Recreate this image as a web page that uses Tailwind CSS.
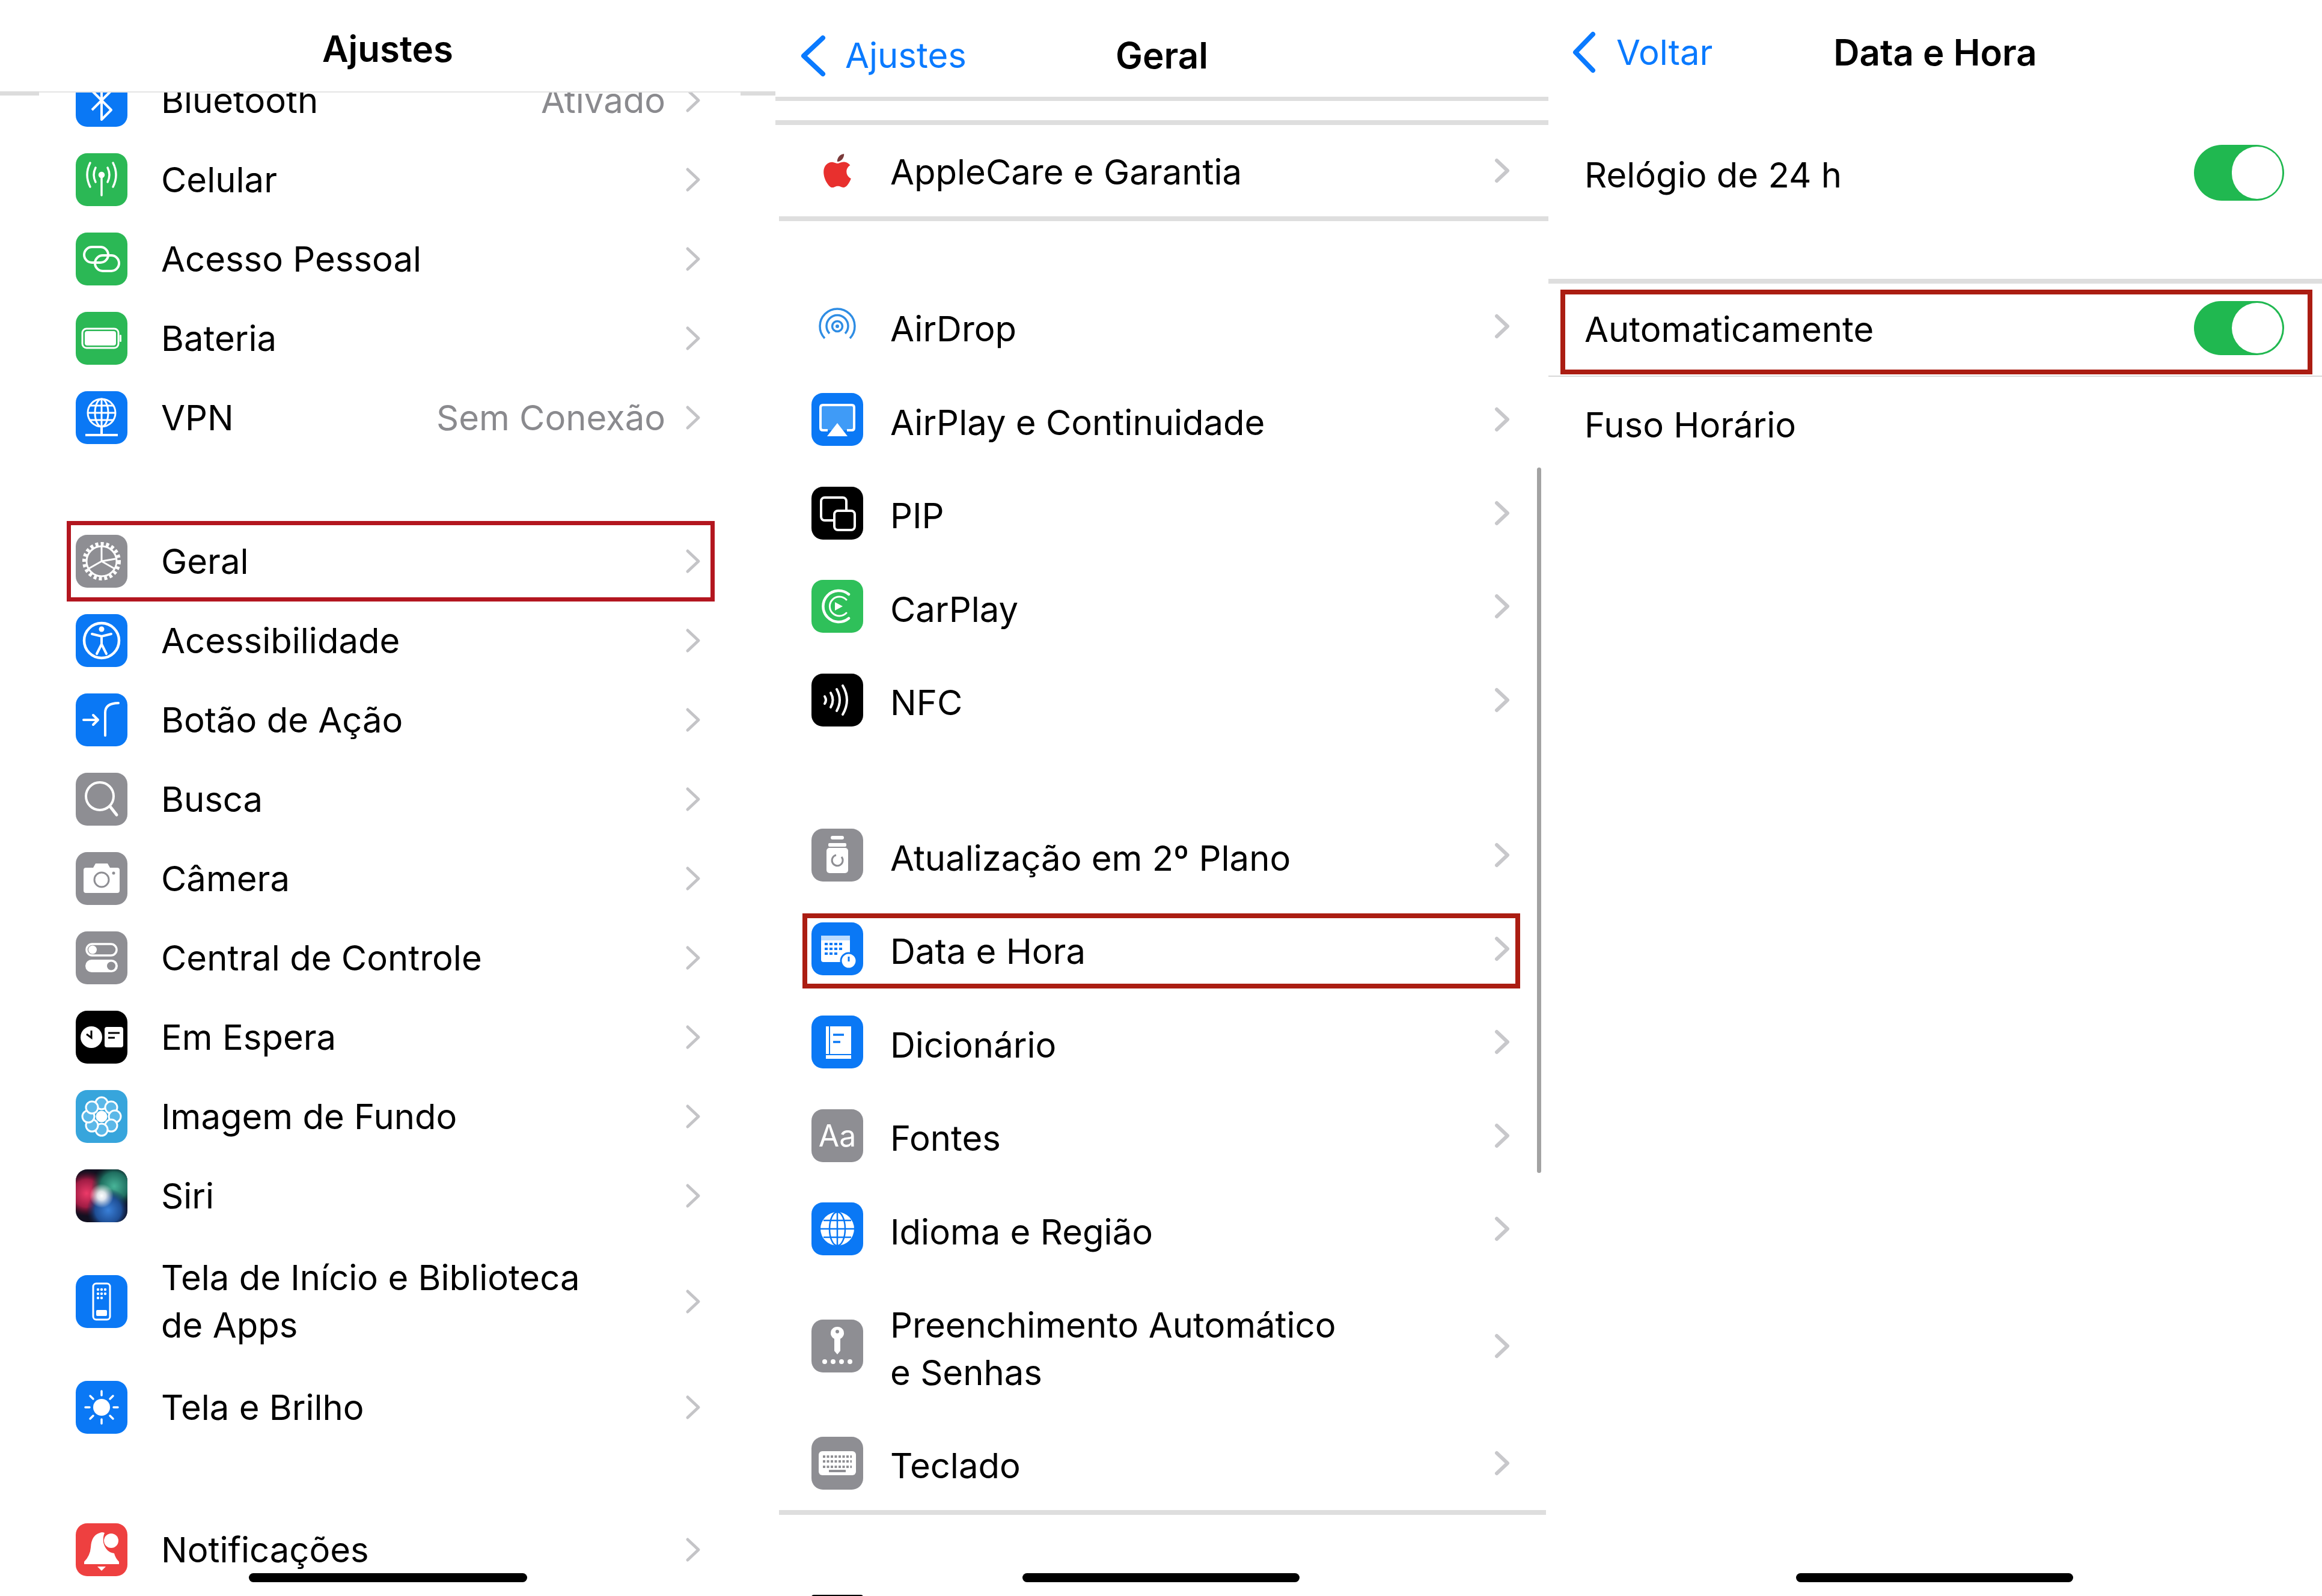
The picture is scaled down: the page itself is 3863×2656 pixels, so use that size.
<!DOCTYPE html>
<html lang="pt-BR">
  <head>
    <meta charset="UTF-8" />
    <meta name="viewport" content="width=device-width, initial-scale=1.0" />
    <title>Ajustes - Data e Hora</title>
    <script src="https://cdn.jsdelivr.net/npm/@tailwindcss/browser@4"></script>
  </head>
  <body class="bg-white text-black [font-family:Inter,sans-serif] text-[58px] leading-[79px]">
    <div class="flex h-[2656px] w-[3863px] overflow-hidden">

      <!-- Ajustes -->
      <div class="relative w-[1290px] shrink-0 overflow-hidden">
        <div class="relative z-10 flex h-[152px] items-center justify-center bg-white pt-[10px] text-[60px] font-semibold">Ajustes</div>
        <div class="relative z-10 flex h-[7px] items-start">
          <div class="h-[7px] w-[65px] bg-[#dcdcdc]"></div>
          <div class="h-[2px] flex-1 bg-[#e4e4e4]"></div>
          <div class="h-[7px] w-[58px] bg-[#dcdcdc]"></div>
        </div>
        <div class="-mt-[58px]">
          <div class="flex h-[132px] items-center pl-[126px] pr-[124px]">
            <span class="h-[88px] w-[86px] shrink-0 overflow-hidden rounded-[19px] bg-[#0a78f5]">
              <svg viewBox="0 0 86 88" class="h-full w-full" fill="none" stroke="#fff" stroke-width="4" stroke-linejoin="round"><path d="M27 28 L59 60 L43 76 V12 L59 28 L27 60" /></svg>
            </span>
            <span class="ml-[56px] flex-1">Bluetooth</span>
            <span class="mr-[33px] text-[#8a8a8e]">Ativado</span>
            <svg viewBox="0 0 26 42" class="h-[42px] w-[26px]" fill="none" stroke="#c4c4c7" stroke-width="5" stroke-linecap="round" stroke-linejoin="round"><path d="M4 4 L22 21 L4 38" /></svg>
          </div>
          <div class="flex h-[132px] items-center pl-[126px] pr-[124px]">
            <span class="h-[88px] w-[86px] shrink-0 overflow-hidden rounded-[19px] bg-[#2bb855]">
              <svg viewBox="0 0 86 88" class="h-full w-full" fill="none" stroke="#fff" stroke-width="3.5" stroke-linecap="round"><circle cx="43" cy="36" r="3.5" fill="#fff" /><path d="M43 38 V70 M33 24 Q27 36 33 48 M53 24 Q59 36 53 48 M24 16 Q14 36 24 56 M62 16 Q72 36 62 56" /></svg>
            </span>
            <span class="ml-[56px] flex-1">Celular</span>
            <svg viewBox="0 0 26 42" class="h-[42px] w-[26px]" fill="none" stroke="#c4c4c7" stroke-width="5" stroke-linecap="round" stroke-linejoin="round"><path d="M4 4 L22 21 L4 38" /></svg>
          </div>
          <div class="flex h-[132px] items-center pl-[126px] pr-[124px]">
            <span class="h-[88px] w-[86px] shrink-0 overflow-hidden rounded-[19px] bg-[#2bb855]">
              <svg viewBox="0 0 86 88" class="h-full w-full" fill="none" stroke="#fff" stroke-width="4"><rect x="14" y="24" width="40" height="26" rx="13" /><rect x="32" y="38" width="40" height="26" rx="13" /></svg>
            </span>
            <span class="ml-[56px] flex-1">Acesso Pessoal</span>
            <svg viewBox="0 0 26 42" class="h-[42px] w-[26px]" fill="none" stroke="#c4c4c7" stroke-width="5" stroke-linecap="round" stroke-linejoin="round"><path d="M4 4 L22 21 L4 38" /></svg>
          </div>
          <div class="flex h-[132px] items-center pl-[126px] pr-[124px]">
            <span class="h-[88px] w-[86px] shrink-0 overflow-hidden rounded-[19px] bg-[#2bb855]">
              <svg viewBox="0 0 86 88" class="h-full w-full" fill="#fff"><rect x="11" y="28" width="60" height="32" rx="7" fill="#2bb855" stroke="#fff" stroke-width="3" /><rect x="15" y="32" width="52" height="24" rx="4" /><rect x="73" y="38" width="3" height="12" rx="1.5" /></svg>
            </span>
            <span class="ml-[56px] flex-1">Bateria</span>
            <svg viewBox="0 0 26 42" class="h-[42px] w-[26px]" fill="none" stroke="#c4c4c7" stroke-width="5" stroke-linecap="round" stroke-linejoin="round"><path d="M4 4 L22 21 L4 38" /></svg>
          </div>
          <div class="flex h-[132px] items-center pl-[126px] pr-[124px]">
            <span class="h-[88px] w-[86px] shrink-0 overflow-hidden rounded-[19px] bg-[#0a78f5]">
              <svg viewBox="0 0 86 88" class="h-full w-full" fill="none" stroke="#fff" stroke-width="3"><circle cx="43" cy="36" r="23" /><ellipse cx="43" cy="36" rx="11" ry="23" /><path d="M43 13 V59 M20 36 H66 M24 24 H62 M24 48 H62" /><path d="M43 59 V73 M16 73 H70" stroke-width="4" /></svg>
            </span>
            <span class="ml-[56px] flex-1">VPN</span>
            <span class="mr-[33px] text-[#8a8a8e]">Sem Conexão</span>
            <svg viewBox="0 0 26 42" class="h-[42px] w-[26px]" fill="none" stroke="#c4c4c7" stroke-width="5" stroke-linecap="round" stroke-linejoin="round"><path d="M4 4 L22 21 L4 38" /></svg>
          </div>

          <div class="h-[107px]"></div>

          <div class="relative flex h-[132px] items-center pl-[126px] pr-[124px]">
            <span class="h-[88px] w-[86px] shrink-0 overflow-hidden rounded-[19px] bg-[#8e8e93]">
              <svg viewBox="0 0 86 88" class="h-full w-full" fill="none" stroke="#fff"><circle cx="43" cy="44" r="29" stroke-width="6" stroke-dasharray="5 4" /><circle cx="43" cy="44" r="25" stroke-width="3" /><path d="M43 44 L43 20 M43 44 L22 56 M43 44 L64 56 M43 44 L66 40" stroke-width="3" /></svg>
            </span>
            <span class="ml-[56px] flex-1">Geral</span>
            <svg viewBox="0 0 26 42" class="h-[42px] w-[26px]" fill="none" stroke="#c4c4c7" stroke-width="5" stroke-linecap="round" stroke-linejoin="round"><path d="M4 4 L22 21 L4 38" /></svg>
            <div class="absolute -top-[1px] -bottom-[1px] left-[111px] right-[101px] border-[7px] border-[#b3161f]"></div>
          </div>
          <div class="flex h-[132px] items-center pl-[126px] pr-[124px]">
            <span class="h-[88px] w-[86px] shrink-0 overflow-hidden rounded-[19px] bg-[#0a78f5]">
              <svg viewBox="0 0 86 88" class="h-full w-full" fill="none" stroke="#fff" stroke-width="4" stroke-linecap="round"><circle cx="43" cy="44" r="29" stroke-width="4.5" /><circle cx="43" cy="25" r="4.5" fill="#fff" stroke="none" /><path d="M27 33 L43 37 L59 33 M43 37 V50 M43 50 L35 66 M43 50 L51 66" /></svg>
            </span>
            <span class="ml-[56px] flex-1">Acessibilidade</span>
            <svg viewBox="0 0 26 42" class="h-[42px] w-[26px]" fill="none" stroke="#c4c4c7" stroke-width="5" stroke-linecap="round" stroke-linejoin="round"><path d="M4 4 L22 21 L4 38" /></svg>
          </div>
          <div class="flex h-[132px] items-center pl-[126px] pr-[124px]">
            <span class="h-[88px] w-[86px] shrink-0 overflow-hidden rounded-[19px] bg-[#0a78f5]">
              <svg viewBox="0 0 86 88" class="h-full w-full" fill="none" stroke="#fff" stroke-width="4" stroke-linecap="round" stroke-linejoin="round"><path d="M71 16 Q49 16 49 32 V70 M13 44 H37 M29 36 L37 44 L29 52" /></svg>
            </span>
            <span class="ml-[56px] flex-1">Botão de Ação</span>
            <svg viewBox="0 0 26 42" class="h-[42px] w-[26px]" fill="none" stroke="#c4c4c7" stroke-width="5" stroke-linecap="round" stroke-linejoin="round"><path d="M4 4 L22 21 L4 38" /></svg>
          </div>
          <div class="flex h-[132px] items-center pl-[126px] pr-[124px]">
            <span class="h-[88px] w-[86px] shrink-0 overflow-hidden rounded-[19px] bg-[#8e8e93]">
              <svg viewBox="0 0 86 88" class="h-full w-full" fill="none" stroke="#fff" stroke-width="4" stroke-linecap="round"><circle cx="40" cy="39" r="23" /><path d="M57 56 L68 70" stroke-width="5" /></svg>
            </span>
            <span class="ml-[56px] flex-1">Busca</span>
            <svg viewBox="0 0 26 42" class="h-[42px] w-[26px]" fill="none" stroke="#c4c4c7" stroke-width="5" stroke-linecap="round" stroke-linejoin="round"><path d="M4 4 L22 21 L4 38" /></svg>
          </div>
          <div class="flex h-[132px] items-center pl-[126px] pr-[124px]">
            <span class="h-[88px] w-[86px] shrink-0 overflow-hidden rounded-[19px] bg-[#8e8e93]">
              <svg viewBox="0 0 86 88" class="h-full w-full"><path d="M17 26 H29 L33 19 H53 L57 26 H69 Q73 26 73 30 V64 Q73 68 69 68 H17 Q13 68 13 64 V30 Q13 26 17 26Z" fill="#fff" /><circle cx="43" cy="46" r="12" fill="#fff" stroke="#8e8e93" stroke-width="3" /><circle cx="63" cy="35" r="2.5" fill="#8e8e93" /></svg>
            </span>
            <span class="ml-[56px] flex-1">Câmera</span>
            <svg viewBox="0 0 26 42" class="h-[42px] w-[26px]" fill="none" stroke="#c4c4c7" stroke-width="5" stroke-linecap="round" stroke-linejoin="round"><path d="M4 4 L22 21 L4 38" /></svg>
          </div>
          <div class="flex h-[132px] items-center pl-[126px] pr-[124px]">
            <span class="h-[88px] w-[86px] shrink-0 overflow-hidden rounded-[19px] bg-[#8e8e93]">
              <svg viewBox="0 0 86 88" class="h-full w-full"><rect x="18" y="21" width="50" height="19" rx="9.5" fill="none" stroke="#fff" stroke-width="3.5" /><circle cx="28" cy="30.5" r="7" fill="#fff" /><rect x="16" y="47" width="54" height="21" rx="10.5" fill="#fff" /><circle cx="59" cy="57.5" r="7" fill="#8e8e93" /></svg>
            </span>
            <span class="ml-[56px] flex-1">Central de Controle</span>
            <svg viewBox="0 0 26 42" class="h-[42px] w-[26px]" fill="none" stroke="#c4c4c7" stroke-width="5" stroke-linecap="round" stroke-linejoin="round"><path d="M4 4 L22 21 L4 38" /></svg>
          </div>
          <div class="flex h-[132px] items-center pl-[126px] pr-[124px]">
            <span class="h-[88px] w-[86px] shrink-0 overflow-hidden rounded-[19px] bg-black">
              <svg viewBox="0 0 86 88" class="h-full w-full"><circle cx="26" cy="44" r="18" fill="#fff" /><path d="M26 33 V45 L18 39" fill="none" stroke="#000" stroke-width="3" /><rect x="48" y="27" width="31" height="34" rx="4" fill="#fff" /><path d="M54 37 H73 M54 45 H65" stroke="#000" stroke-width="3" /></svg>
            </span>
            <span class="ml-[56px] flex-1">Em Espera</span>
            <svg viewBox="0 0 26 42" class="h-[42px] w-[26px]" fill="none" stroke="#c4c4c7" stroke-width="5" stroke-linecap="round" stroke-linejoin="round"><path d="M4 4 L22 21 L4 38" /></svg>
          </div>
          <div class="flex h-[132px] items-center pl-[126px] pr-[124px]">
            <span class="h-[88px] w-[86px] shrink-0 overflow-hidden rounded-[19px] bg-[#37a5dc]">
              <svg viewBox="0 0 86 88" class="h-full w-full" fill="#5cb8e8" stroke="#fff" stroke-width="3"><circle cx="43" cy="22" r="10" /><circle cx="59" cy="29" r="10" /><circle cx="65" cy="44" r="10" /><circle cx="59" cy="59" r="10" /><circle cx="43" cy="66" r="10" /><circle cx="27" cy="59" r="10" /><circle cx="21" cy="44" r="10" /><circle cx="27" cy="29" r="10" /><circle cx="43" cy="44" r="8" fill="#fff" /></svg>
            </span>
            <span class="ml-[56px] flex-1">Imagem de Fundo</span>
            <svg viewBox="0 0 26 42" class="h-[42px] w-[26px]" fill="none" stroke="#c4c4c7" stroke-width="5" stroke-linecap="round" stroke-linejoin="round"><path d="M4 4 L22 21 L4 38" /></svg>
          </div>
          <div class="flex h-[132px] items-center pl-[126px] pr-[124px]">
            <span class="h-[88px] w-[86px] shrink-0 overflow-hidden rounded-[19px] bg-[#121020]">
              <svg viewBox="0 0 86 88" class="h-full w-full">
                <defs>
                  <radialGradient id="siriRed"><stop offset="0" stop-color="#ec3a68" /><stop offset="0.6" stop-color="#a01c44" /><stop offset="1" stop-color="#5a0b24" stop-opacity="0" /></radialGradient>
                  <radialGradient id="siriGreen"><stop offset="0" stop-color="#48b498" /><stop offset="0.6" stop-color="#1f6f60" /><stop offset="1" stop-color="#0b3a34" stop-opacity="0" /></radialGradient>
                  <radialGradient id="siriBlue"><stop offset="0" stop-color="#3a80d8" /><stop offset="0.6" stop-color="#1f4f96" /><stop offset="1" stop-color="#0c2350" stop-opacity="0" /></radialGradient>
                  <radialGradient id="siriCore"><stop offset="0" stop-color="#fff" /><stop offset="0.35" stop-color="#fff" stop-opacity="0.85" /><stop offset="1" stop-color="#fff" stop-opacity="0" /></radialGradient>
                </defs>
                <circle cx="18" cy="40" r="38" fill="url(#siriRed)" />
                <circle cx="64" cy="28" r="38" fill="url(#siriGreen)" />
                <circle cx="54" cy="68" r="36" fill="url(#siriBlue)" />
                <circle cx="43" cy="44" r="20" fill="url(#siriCore)" />
              </svg>
            </span>
            <span class="ml-[56px] flex-1">Siri</span>
            <svg viewBox="0 0 26 42" class="h-[42px] w-[26px]" fill="none" stroke="#c4c4c7" stroke-width="5" stroke-linecap="round" stroke-linejoin="round"><path d="M4 4 L22 21 L4 38" /></svg>
          </div>
          <div class="flex h-[220px] items-center pl-[126px] pr-[124px]">
            <span class="h-[88px] w-[86px] shrink-0 overflow-hidden rounded-[19px] bg-[#0a78f5]">
              <svg viewBox="0 0 86 88" class="h-full w-full"><rect x="29" y="14" width="28" height="60" rx="5" fill="none" stroke="#fff" stroke-width="3" /><g fill="#fff"><circle cx="37" cy="24" r="2.2" /><circle cx="43" cy="24" r="2.2" /><circle cx="49" cy="24" r="2.2" /><circle cx="37" cy="31" r="2.2" /><circle cx="43" cy="31" r="2.2" /><circle cx="49" cy="31" r="2.2" /><circle cx="37" cy="38" r="2.2" /><circle cx="43" cy="38" r="2.2" /><rect x="34" y="58" width="18" height="10" rx="2" /></g></svg>
            </span>
            <span class="ml-[56px] flex-1">Tela de Início e Biblioteca<br />de Apps</span>
            <svg viewBox="0 0 26 42" class="h-[42px] w-[26px]" fill="none" stroke="#c4c4c7" stroke-width="5" stroke-linecap="round" stroke-linejoin="round"><path d="M4 4 L22 21 L4 38" /></svg>
          </div>
          <div class="flex h-[132px] items-center pl-[126px] pr-[124px]">
            <span class="h-[88px] w-[86px] shrink-0 overflow-hidden rounded-[19px] bg-[#0a78f5]">
              <svg viewBox="0 0 86 88" class="h-full w-full" stroke="#fff" stroke-width="3.5" stroke-linecap="round"><circle cx="43" cy="44" r="14" fill="#fff" stroke="none" /><path d="M43 17 V24 M43 64 V71 M16 44 H23 M63 44 H70 M24 25 L29 30 M57 58 L62 63 M62 25 L57 30 M29 58 L24 63" /></svg>
            </span>
            <span class="ml-[56px] flex-1">Tela e Brilho</span>
            <svg viewBox="0 0 26 42" class="h-[42px] w-[26px]" fill="none" stroke="#c4c4c7" stroke-width="5" stroke-linecap="round" stroke-linejoin="round"><path d="M4 4 L22 21 L4 38" /></svg>
          </div>

          <div class="h-[105px]"></div>

          <div class="flex h-[132px] items-center pl-[126px] pr-[124px]">
            <span class="h-[88px] w-[86px] shrink-0 overflow-hidden rounded-[19px] bg-[#ee4040]">
              <svg viewBox="0 0 86 88" class="h-full w-full" fill="#fff"><path d="M40 16 Q26 20 25 40 Q24 54 14 64 V68 H72 V64 Q66 58 64 50 Q50 48 46 32 Q45 22 48 16 Q44 14 40 16Z" /><path d="M36 72 H50 L43 79Z" /><circle cx="59" cy="29" r="12" /></svg>
            </span>
            <span class="ml-[56px] flex-1">Notificações</span>
            <svg viewBox="0 0 26 42" class="h-[42px] w-[26px]" fill="none" stroke="#c4c4c7" stroke-width="5" stroke-linecap="round" stroke-linejoin="round"><path d="M4 4 L22 21 L4 38" /></svg>
          </div>
        </div>
        <div class="absolute bottom-[23px] left-[414px] h-[15px] w-[463px] rounded-full bg-black"></div>
      </div>

      <!-- Geral -->
      <div class="relative w-[1286px] shrink-0 overflow-hidden">
        <div class="grid h-[161px] grid-cols-3 items-center pt-[24px]">
          <div class="flex items-center gap-[30px] pl-[40px] text-[#0a7aff]">
            <svg viewBox="0 0 46 70" class="h-[70px] w-[46px]" fill="none" stroke="#0a7aff" stroke-width="8" stroke-linecap="round" stroke-linejoin="round"><path d="M39 5 L7 35 L39 65" /></svg>
            <span>Ajustes</span>
          </div>
          <div class="text-center text-[60px] font-semibold">Geral</div>
        </div>
        <div class="h-[7px] bg-[#dedede]"></div>
        <div class="h-[32px]"></div>
        <div class="h-[8px] bg-[#dedede]"></div>
        <div class="flex h-[152px] items-center pl-[60px] pr-[64px]">
          <span class="flex h-[88px] w-[86px] shrink-0 items-center justify-center">
            <svg viewBox="0 0 24 24" class="h-[56px] w-[56px]"><path fill="#e8302e" d="M12.152 6.896c-.948 0-2.415-1.078-3.96-1.04-2.04.027-3.91 1.183-4.961 3.014-2.117 3.675-.546 9.103 1.519 12.09 1.013 1.454 2.208 3.09 3.792 3.039 1.52-.065 2.09-.987 3.935-.987 1.831 0 2.35.987 3.96.948 1.637-.026 2.676-1.48 3.676-2.948 1.156-1.688 1.636-3.325 1.662-3.415-.039-.013-3.182-1.221-3.22-4.857-.026-3.04 2.48-4.494 2.597-4.559-1.429-2.09-3.623-2.324-4.39-2.376-2-.156-3.675 1.09-4.61 1.09z" /><path fill="#7a3a3a" d="M15.53 3.83c.843-1.012 1.4-2.427 1.245-3.83-1.207.052-2.662.805-3.532 1.818-.78.896-1.454 2.338-1.273 3.714 1.338.104 2.715-.688 3.559-1.701" /></svg>
          </span>
          <span class="ml-[45px] flex-1 pt-[4px]">AppleCare e Garantia</span>
          <svg viewBox="0 0 26 42" class="h-[42px] w-[26px]" fill="none" stroke="#c8c8cb" stroke-width="6" stroke-linecap="round" stroke-linejoin="round"><path d="M4 4 L22 21 L4 38" /></svg>
        </div>
        <div class="ml-[6px] h-[8px] bg-[#dedede]"></div>
        <div class="h-[97px]"></div>

        <div class="flex h-[155.5px] items-center pl-[60px] pr-[64px]">
          <span class="h-[88px] w-[86px] shrink-0 overflow-hidden rounded-[19px]">
            <svg viewBox="0 0 86 88" class="h-full w-full" fill="none" stroke="#2f8de4" stroke-width="3.5"><path d="M22 64 A29 29 0 1 1 64 64" /><path d="M30 56 A18 18 0 1 1 56 56" /><circle cx="43" cy="44" r="8.5" /><circle cx="43" cy="44" r="3" fill="#2f8de4" stroke="none" /></svg>
          </span>
          <span class="ml-[45px] flex-1 pt-[10px]">AirDrop</span>
          <svg viewBox="0 0 26 42" class="h-[42px] w-[26px]" fill="none" stroke="#c8c8cb" stroke-width="6" stroke-linecap="round" stroke-linejoin="round"><path d="M4 4 L22 21 L4 38" /></svg>
        </div>
        <div class="flex h-[155.5px] items-center pl-[60px] pr-[64px]">
          <span class="h-[88px] w-[86px] shrink-0 overflow-hidden rounded-[19px] bg-[#0a78f5]">
            <svg viewBox="0 0 86 88" class="h-full w-full"><path d="M27 62 H19 Q15 62 15 58 V24 Q15 20 19 20 H67 Q71 20 71 24 V58 Q71 62 67 62 H59" fill="#3f9bf7" stroke="#fff" stroke-width="4" /><path d="M43 50 L60 72 H26Z" fill="#fff" /></svg>
          </span>
          <span class="ml-[45px] flex-1 pt-[10px]">AirPlay e Continuidade</span>
          <svg viewBox="0 0 26 42" class="h-[42px] w-[26px]" fill="none" stroke="#c8c8cb" stroke-width="6" stroke-linecap="round" stroke-linejoin="round"><path d="M4 4 L22 21 L4 38" /></svg>
        </div>
        <div class="flex h-[155.5px] items-center pl-[60px] pr-[64px]">
          <span class="h-[88px] w-[86px] shrink-0 overflow-hidden rounded-[19px] bg-black">
            <svg viewBox="0 0 86 88" class="h-full w-full" stroke="#fff" stroke-width="4"><rect x="16" y="18" width="42" height="38" rx="6" fill="#000" /><rect x="38" y="40" width="34" height="32" rx="6" fill="#000" /></svg>
          </span>
          <span class="ml-[45px] flex-1 pt-[10px]">PIP</span>
          <svg viewBox="0 0 26 42" class="h-[42px] w-[26px]" fill="none" stroke="#c8c8cb" stroke-width="6" stroke-linecap="round" stroke-linejoin="round"><path d="M4 4 L22 21 L4 38" /></svg>
        </div>
        <div class="flex h-[155.5px] items-center pl-[60px] pr-[64px]">
          <span class="h-[88px] w-[86px] shrink-0 overflow-hidden rounded-[19px] bg-[#2fc05a]">
            <svg viewBox="0 0 86 88" class="h-full w-full" fill="none" stroke="#fff" stroke-width="4.5" stroke-linecap="round"><path d="M62 24 A26 26 0 1 0 62 64" /><path d="M58 33 A16 16 0 1 0 58 55" stroke-width="3" /><path d="M39 37 L52 44 L39 51Z" fill="#fff" stroke="none" /></svg>
          </span>
          <span class="ml-[45px] flex-1 pt-[10px]">CarPlay</span>
          <svg viewBox="0 0 26 42" class="h-[42px] w-[26px]" fill="none" stroke="#c8c8cb" stroke-width="6" stroke-linecap="round" stroke-linejoin="round"><path d="M4 4 L22 21 L4 38" /></svg>
        </div>
        <div class="flex h-[155.5px] items-center pl-[60px] pr-[64px]">
          <span class="h-[88px] w-[86px] shrink-0 overflow-hidden rounded-[19px] bg-black">
            <svg viewBox="0 0 86 88" class="h-full w-full" fill="none" stroke="#fff" stroke-width="4" stroke-linecap="round"><path d="M22 38 Q26 44 22 50" /><path d="M32 32 Q39 44 32 56" /><path d="M42 26 Q52 44 42 62" /><path d="M52 20 Q66 44 52 68" /></svg>
          </span>
          <span class="ml-[45px] flex-1 pt-[10px]">NFC</span>
          <svg viewBox="0 0 26 42" class="h-[42px] w-[26px]" fill="none" stroke="#c8c8cb" stroke-width="6" stroke-linecap="round" stroke-linejoin="round"><path d="M4 4 L22 21 L4 38" /></svg>
        </div>

        <div class="h-[103px]"></div>

        <div class="flex h-[155.5px] items-center pl-[60px] pr-[64px]">
          <span class="h-[88px] w-[86px] shrink-0 overflow-hidden rounded-[19px] bg-[#8e8e93]">
            <svg viewBox="0 0 86 88" class="h-full w-full"><rect x="32" y="12" width="22" height="6" rx="3" fill="#fff" /><rect x="28" y="24" width="30" height="6" rx="2" fill="#fff" /><rect x="25" y="32" width="36" height="42" rx="5" fill="#fff" /><path d="M50 47 A9 9 0 1 1 41 44" fill="none" stroke="#8e8e93" stroke-width="3" /></svg>
          </span>
          <span class="ml-[45px] flex-1 pt-[10px]">Atualização em 2º Plano</span>
          <svg viewBox="0 0 26 42" class="h-[42px] w-[26px]" fill="none" stroke="#c8c8cb" stroke-width="6" stroke-linecap="round" stroke-linejoin="round"><path d="M4 4 L22 21 L4 38" /></svg>
        </div>
        <div class="relative flex h-[155.5px] items-center pl-[60px] pr-[64px]">
          <span class="h-[88px] w-[86px] shrink-0 overflow-hidden rounded-[19px] bg-[#0a78f5]">
            <svg viewBox="0 0 86 88" class="h-full w-full"><rect x="16" y="22" width="48" height="44" rx="4" fill="#fff" /><rect x="16" y="22" width="48" height="8" fill="#bcdcff" /><g fill="#0a78f5"><rect x="22" y="34" width="5" height="4" /><rect x="30" y="34" width="5" height="4" /><rect x="38" y="34" width="5" height="4" /><rect x="46" y="34" width="5" height="4" /><rect x="22" y="42" width="5" height="4" /><rect x="30" y="42" width="5" height="4" /><rect x="38" y="42" width="5" height="4" /><rect x="46" y="42" width="5" height="4" /><rect x="22" y="50" width="5" height="4" /><rect x="30" y="50" width="5" height="4" /><rect x="38" y="50" width="5" height="4" /></g><circle cx="62" cy="64" r="13" fill="#fff" stroke="#0a78f5" stroke-width="3" /><path d="M62 57 V65" stroke="#0a78f5" stroke-width="3" /></svg>
          </span>
          <span class="ml-[45px] flex-1 pt-[10px]">Data e Hora</span>
          <svg viewBox="0 0 26 42" class="h-[42px] w-[26px]" fill="none" stroke="#c8c8cb" stroke-width="6" stroke-linecap="round" stroke-linejoin="round"><path d="M4 4 L22 21 L4 38" /></svg>
          <div class="absolute top-[18.5px] bottom-[12px] left-[45px] right-[47px] border-[8px] border-[#ab1d12]"></div>
        </div>
        <div class="flex h-[155.5px] items-center pl-[60px] pr-[64px]">
          <span class="h-[88px] w-[86px] shrink-0 overflow-hidden rounded-[19px] bg-[#0a78f5]">
            <svg viewBox="0 0 86 88" class="h-full w-full"><path d="M24 18 H66 V64 H24Z" fill="#fff" /><rect x="24" y="66" width="42" height="6" fill="#fff" /><path d="M30 18 V64" stroke="#0a78f5" stroke-width="2" /><path d="M36 32 H54 M36 44 H48" stroke="#0a78f5" stroke-width="3.5" /></svg>
          </span>
          <span class="ml-[45px] flex-1 pt-[10px]">Dicionário</span>
          <svg viewBox="0 0 26 42" class="h-[42px] w-[26px]" fill="none" stroke="#c8c8cb" stroke-width="6" stroke-linecap="round" stroke-linejoin="round"><path d="M4 4 L22 21 L4 38" /></svg>
        </div>
        <div class="flex h-[155.5px] items-center pl-[60px] pr-[64px]">
          <span class="flex h-[88px] w-[86px] shrink-0 items-center justify-center overflow-hidden rounded-[19px] bg-[#8e8e93] text-[50px] leading-none text-white">Aa</span>
          <span class="ml-[45px] flex-1 pt-[10px]">Fontes</span>
          <svg viewBox="0 0 26 42" class="h-[42px] w-[26px]" fill="none" stroke="#c8c8cb" stroke-width="6" stroke-linecap="round" stroke-linejoin="round"><path d="M4 4 L22 21 L4 38" /></svg>
        </div>
        <div class="flex h-[155.5px] items-center pl-[60px] pr-[64px]">
          <span class="h-[88px] w-[86px] shrink-0 overflow-hidden rounded-[19px] bg-[#0a78f5]">
            <svg viewBox="0 0 86 88" class="h-full w-full"><circle cx="43" cy="44" r="28" fill="#fff" /><g fill="none" stroke="#0a78f5" stroke-width="2.5"><ellipse cx="43" cy="44" rx="13" ry="28" /><path d="M43 16 V72 M15 44 H71 M20 30 H66 M20 58 H66" /></g></svg>
          </span>
          <span class="ml-[45px] flex-1 pt-[10px]">Idioma e Região</span>
          <svg viewBox="0 0 26 42" class="h-[42px] w-[26px]" fill="none" stroke="#c8c8cb" stroke-width="6" stroke-linecap="round" stroke-linejoin="round"><path d="M4 4 L22 21 L4 38" /></svg>
        </div>
        <div class="flex h-[234px] items-center pl-[60px] pr-[64px]">
          <span class="h-[88px] w-[86px] shrink-0 overflow-hidden rounded-[19px] bg-[#8e8e93]">
            <svg viewBox="0 0 86 88" class="h-full w-full" fill="#fff"><path d="M43 12 A10.5 10.5 0 0 1 48 32 V52 L43 58 L38 52 V32 A10.5 10.5 0 0 1 43 12Z" /><circle cx="43" cy="20" r="3" fill="#8e8e93" /><circle cx="22" cy="70" r="4" /><circle cx="36" cy="70" r="4" /><circle cx="50" cy="70" r="4" /><circle cx="64" cy="70" r="4" /></svg>
          </span>
          <span class="ml-[45px] flex-1 pt-[10px]">Preenchimento Automático<br />e Senhas</span>
          <svg viewBox="0 0 26 42" class="h-[42px] w-[26px]" fill="none" stroke="#c8c8cb" stroke-width="6" stroke-linecap="round" stroke-linejoin="round"><path d="M4 4 L22 21 L4 38" /></svg>
        </div>
        <div class="flex h-[155.5px] items-center pl-[60px] pr-[64px]">
          <span class="h-[88px] w-[86px] shrink-0 overflow-hidden rounded-[19px] bg-[#8e8e93]">
            <svg viewBox="0 0 86 88" class="h-full w-full"><rect x="12" y="24" width="62" height="40" rx="6" fill="#fff" /><path d="M19 33 H67 M19 41 H67" stroke="#8e8e93" stroke-width="4" stroke-dasharray="4 2.5" /><path d="M19 50 H67" stroke="#8e8e93" stroke-width="4" stroke-dasharray="4 2.5" /><path d="M29 57 H57" stroke="#8e8e93" stroke-width="4" /></svg>
          </span>
          <span class="ml-[45px] flex-1 pt-[10px]">Teclado</span>
          <svg viewBox="0 0 26 42" class="h-[42px] w-[26px]" fill="none" stroke="#c8c8cb" stroke-width="6" stroke-linecap="round" stroke-linejoin="round"><path d="M4 4 L22 21 L4 38" /></svg>
        </div>
        <div class="ml-[6px] mr-[4px] h-[8px] bg-[#dedede]"></div>
        <div class="ml-[60px] mt-[133px] h-[4px] w-[86px] rounded-t-[19px] bg-black"></div>

        <div class="absolute right-[12px] top-[778px] h-[1174px] w-[7px] rounded-full bg-[#a3a3a3]"></div>
        <div class="absolute bottom-[23px] left-[411px] h-[15px] w-[461px] rounded-full bg-black"></div>
      </div>

      <!-- Data e Hora -->
      <div class="relative flex-1 overflow-hidden">
        <div class="grid h-[160px] grid-cols-3 items-center pt-[14px]">
          <div class="flex items-center gap-[33px] pl-[39px] text-[#0a7aff]">
            <svg viewBox="0 0 41 70" class="h-[70px] w-[41px]" fill="none" stroke="#0a7aff" stroke-width="8" stroke-linecap="round" stroke-linejoin="round"><path d="M35 5 L6 35 L35 65" /></svg>
            <span>Voltar</span>
          </div>
          <div class="whitespace-nowrap text-center text-[60px] font-semibold">Data e Hora</div>
        </div>
        <div class="flex h-[262px] items-center justify-between pl-[60px] pr-[63px]">
          <span>Relógio de 24 h</span>
          <span class="-mt-[8px] flex h-[93px] w-[150px] items-center justify-end rounded-full bg-[#20b850] pr-[3px]">
            <span class="h-[87px] w-[84px] rounded-full bg-white"></span>
          </span>
        </div>
        <div class="h-[42px]"></div>
        <div class="h-[8px] bg-[#dedede]"></div>
        <div class="relative flex h-[155px] items-center justify-between border-b-2 border-[#d8d8d8] pl-[60px] pr-[63px]">
          <span>Automaticamente</span>
          <span class="-mt-[5px] flex h-[90px] w-[150px] items-center justify-end rounded-full bg-[#20b850] pr-[3px]">
            <span class="h-[84px] w-[84px] rounded-full bg-white"></span>
          </span>
          <div class="absolute top-[10px] bottom-[2px] left-[20px] right-[16px] border-[8px] border-[#ab1d12]"></div>
        </div>
        <div class="flex h-[160px] items-center pl-[60px]">Fuso Horário</div>
        <div class="absolute bottom-[23px] left-[412px] h-[15px] w-[461px] rounded-full bg-black"></div>
      </div>
    </div>
  </body>
</html>
